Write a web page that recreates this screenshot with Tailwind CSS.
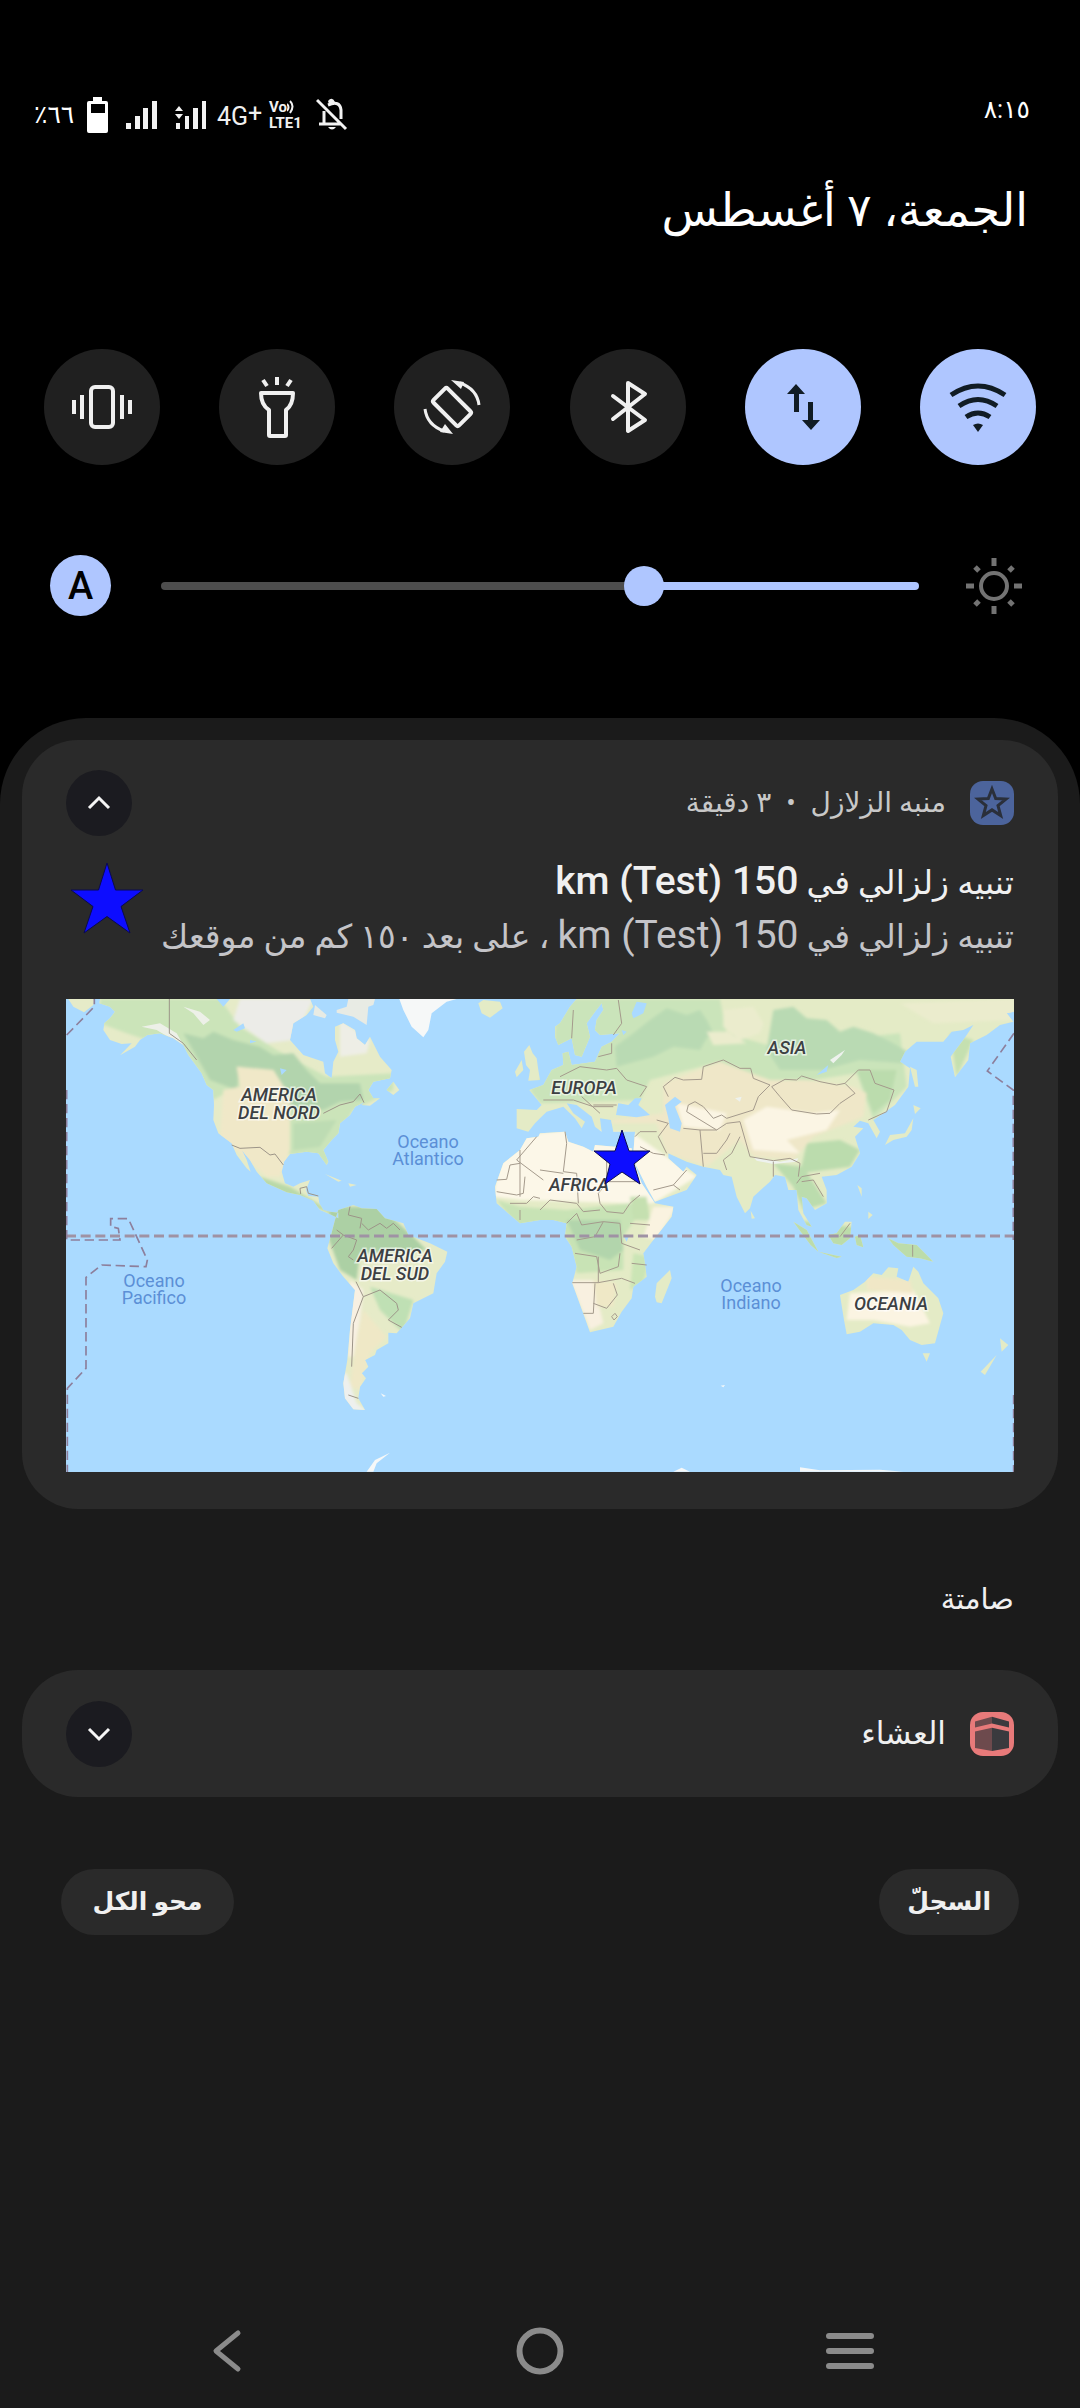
<!DOCTYPE html>
<html lang="ar" dir="rtl">
<head>
<meta charset="utf-8">
<meta name="viewport" content="width=device-width, initial-scale=1">
<title>لوحة الإشعارات</title>
<script src="https://cdn.jsdelivr.net/npm/@tailwindcss/browser@4"></script>
</head>
<body class="bg-black">
<div class="flex min-h-screen flex-col bg-black font-[Roboto,'DejaVu_Sans',sans-serif] text-[#f0f0f0]">

  <!-- Status bar -->
  <header class="flex h-[140px] items-end justify-between px-[50px] pb-2">
    <time class="pb-[6px] text-[25px] leading-8 text-white" dir="ltr">٨:١٥</time>
    <div class="-ml-4 flex h-[34px] items-center" dir="ltr">
      <span class="w-[53px] text-[25px] leading-8 text-white">٪٦٦</span>
      <svg class="h-9 w-[22px]" viewBox="0 0 22 36" fill="#fff" aria-label="البطارية"><path fill-rule="evenodd" d="M6 0h9v4h4q2 0 2 2v28q0 2-2 2H2q-2 0-2-2V6q0-2 2-2h4zM4 7v9h14V7z"/></svg>
      <svg class="ml-[17px] h-7 w-8" viewBox="0 0 32 28" fill="#f2f2f2"><path d="M0 22h5v6H0zM9 15h5v13H9zM17 7h5v21h-5zM26 0h5v28h-5z"/></svg>
      <svg class="ml-[17px] h-7 w-8" viewBox="0 0 32 28" fill="#f2f2f2"><path d="M1 22h4v6H1zM10 15h4v13h-4zM18 7h5v21h-5zM27 0h4v28h-4zM4 5l4 5H0zM0 13h8l-4 5z"/></svg>
      <span class="ml-[10px] w-[46px] text-[25px] leading-8">4G<span class="align-[3px] text-[25px]">+</span></span>
      <span class="ml-[6px] flex w-9 flex-col text-[15px] leading-4 font-bold">
        <span class="flex items-center">Vo<svg class="h-[14px] w-2" viewBox="0 0 8 14" fill="none" stroke="#f2f2f2" stroke-width="2"><path d="M0 4q3 3 0 7M3 1q5 5 0 12"/></svg></span>
        <span>LTE1</span>
      </span>
      <svg class="ml-[11px] h-[34px] w-8" viewBox="0 0 32 34" fill="none" stroke="#f2f2f2" stroke-width="3"><path d="M1 2l29 29M3 26h22M8 25V13M12 7q12-5 13 5v9"/><path d="M12 3q4-5 7 1l-1 2h-5zM12 29h8q-4 5-8 0z" fill="#f2f2f2" stroke="none"/></svg>
    </div>
  </header>

  <h1 class="px-[52px] pt-7 text-[46px] leading-[84px] text-white">الجمعة، ٧ أغسطس</h1>

  <!-- Quick settings -->
  <section class="mt-[97px] flex justify-between px-[44px]">
    <button class="flex size-[116px] items-center justify-center rounded-full bg-[#afc6ff] text-[#111c24]" aria-label="واي فاي">
      <svg class="size-16" viewBox="0 0 64 64" fill="none" stroke="currentColor" stroke-width="5"><path d="M5 20q27-18 54 0M13 31q19-13 38 0M20 42q12-8 24 0"/><path d="M27 50q5-3 10 0l-5 7z" fill="currentColor" stroke="none"/></svg>
    </button>
    <button class="flex size-[116px] items-center justify-center rounded-full bg-[#afc6ff] text-[#111c24]" aria-label="بيانات الجوال">
      <svg class="size-16" viewBox="0 0 64 64" fill="currentColor"><path d="M25 9l9 10h-6v18h-5V19h-7zM37 27h5v18h7l-9 10-9-10h6z"/></svg>
    </button>
    <button class="flex size-[116px] items-center justify-center rounded-full bg-[#202020]" aria-label="بلوتوث">
      <svg class="size-16" viewBox="0 0 64 64" fill="none" stroke="currentColor" stroke-width="4" stroke-linejoin="round" stroke-linecap="round"><path d="M17 21l32 24-17 11V8l17 11-32 25"/></svg>
    </button>
    <button class="flex size-[116px] items-center justify-center rounded-full bg-[#202020]" aria-label="تدوير تلقائي">
      <svg class="size-16" viewBox="0 0 64 64" fill="none" stroke="currentColor" stroke-width="4"><rect x="22" y="14" width="20" height="36" rx="2" transform="rotate(-45 32 32)"/><path d="M40 8q17 6 19 22M24 56Q7 50 5 34" stroke-width="3"/><path d="M31 5l13 2-3 7zM33 59l-13-2 5-8z" fill="currentColor" stroke="none"/></svg>
    </button>
    <button class="flex size-[116px] items-center justify-center rounded-full bg-[#202020]" aria-label="المصباح">
      <svg class="size-16" viewBox="0 0 64 64" fill="none" stroke="currentColor" stroke-width="4"><path d="M16 18h32q0 12-7 17v25q0 1-1 1H25q-1 0-1-1V35q-8-5-8-17z" stroke-linejoin="round"/><path d="M32 2v8M18 5l4 6M46 5l-4 6"/></svg>
    </button>
    <button class="flex size-[116px] items-center justify-center rounded-full bg-[#202020]" aria-label="اهتزاز">
      <svg class="size-16" viewBox="0 0 64 64" fill="none" stroke="currentColor" stroke-width="4"><rect x="21" y="12" width="22" height="40" rx="4"/><path d="M12 20v24M4 25v14M52 20v24M60 25v14"/></svg>
    </button>
  </section>

  <!-- Brightness -->
  <section class="mt-[90px] flex items-center px-[50px]">
    <svg class="mr-2 ml-[47px] size-14 shrink-0" viewBox="0 0 56 56" fill="none" stroke="#737373" stroke-width="4"><circle cx="28" cy="28" r="13"/><path d="M28 0v8M28 48v8M0 28h8M48 28h8" stroke-width="5"/><path d="M9 9l4 4M43 43l4 4M47 9l-4 4M13 43l-4 4" stroke-width="5"/></svg>
    <input type="range" min="0" max="1000" value="355" aria-label="السطوع" class="h-10 min-w-0 flex-1 appearance-none bg-transparent [&::-webkit-slider-runnable-track]:h-2 [&::-webkit-slider-runnable-track]:rounded-full [&::-webkit-slider-runnable-track]:bg-[linear-gradient(to_left,#afc6ff_36%,#4d4d4d_36%)] [&::-webkit-slider-thumb]:-mt-4 [&::-webkit-slider-thumb]:size-10 [&::-webkit-slider-thumb]:appearance-none [&::-webkit-slider-thumb]:rounded-full [&::-webkit-slider-thumb]:bg-[#afc6ff]">
    <button class="mr-[50px] flex size-[61px] shrink-0 items-center justify-center rounded-full bg-[#afc6ff] text-[38px] leading-none font-medium text-black">A</button>
  </section>

  <!-- Notification shade -->
  <main class="mt-[102px] flex flex-1 flex-col rounded-t-[86px] bg-[#1b1b1b] px-[22px] pt-[22px]">
    <article class="rounded-[56px] bg-[#2a2a2a] px-11 pt-[30px] pb-[37px]">
      <div class="flex items-center">
        <svg class="size-11" viewBox="0 0 44 44"><rect width="44" height="44" rx="13" fill="#4c649c"/><path d="M22 8l3.700 9.600 10.300.5-8 6.500 2.700 9.900-8.700-5.600-8.700 5.600 2.700-9.900-8-6.500 10.300-.5z" fill="none" stroke="#2a2f3a" stroke-width="3"/></svg>
        <p class="mr-6 flex-1 text-[28px] leading-8 text-[#c8c8c8]">منبه الزلازل <span class="px-2">•</span> ٣ دقيقة</p>
        <button class="flex size-[66px] items-center justify-center rounded-full bg-[#1b1b20]" aria-label="طي">
          <svg class="h-4 w-6" viewBox="0 0 24 16" fill="none" stroke="#f5f5f5" stroke-width="3"><path d="M2 13l10-10 10 10"/></svg>
        </button>
      </div>
      <div class="mt-5 flex justify-between">
        <div class="text-[33px] leading-[54px] whitespace-nowrap">
          <h2 class="font-medium">تنبيه زلزالي في <span class="text-[39px] leading-9">150 km (Test)</span></h2>
          <p class="text-[#c4c4c8]">تنبيه زلزالي في <span class="text-[39px] leading-9">150 km (Test)</span> ، على بعد ١٥٠ كم من موقعك</p>
        </div>
        <svg class="ml-1 mt-[5px] h-[74px] w-[74px] shrink-0" viewBox="0 0 74 74"><path d="M37 2l8.500 27H73L51 45.500 60 72 37 55.500 14 72l9-26.500L1 29h27.500z" fill="#0d0dff" stroke="#0a0a50"/></svg>
      </div>

      <!-- World map -->
      <svg class="mt-[35px] block w-full" viewBox="0 0 948 473" direction="ltr" role="img" aria-label="خريطة العالم">
        <defs>
          <clipPath id="west"><path id="westLand" d="M120 27L118 40 150 50 165 65 150 85 133 100 130 120 150 150 185 162 215 160 180 196 225 170 240 150 262 135 300 130 340 145 370 165 385 195 400 215 425 250 440 285 460 300 462 345 460 390 475 430 515 460 530 495 560 535 572 545 560 510 545 480 570 510 590 545 620 580 680 607 720 615 760 632 780 660 815 675 835 685V668L810 665 790 660 778 640 775 620 745 618 738 600 750 570 720 580 700 590 675 580 665 545 672 515 690 492 740 485 775 490 800 525 805 515 790 480 815 450 835 430 840 400 870 375 885 350 915 335 905 345 930 347 960 325 940 325 925 300 940 275 990 265 995 240 960 200 930 140 915 165 890 145 885 120 850 100 825 110V150L835 185 820 215 815 265 795 250 790 215 730 195 690 150 700 100 740 75 760 50 750 27ZM825 690L835 660 880 645 905 655 950 657 975 685 1030 700 1045 735 1110 760 1162 785 1155 815 1130 850 1120 910 1060 940 1050 985 1010 1030 985 1028V1060L950 1080 945 1095 915 1110 925 1130 905 1150 918 1165 900 1190 895 1225 915 1260 880 1258 855 1225 850 1180 862 1110 870 1020 885 900 850 860 820 820 802 775 812 740ZM25 27L105 27 100 45 72 67 40 50ZM980 300L1000 275 1018 300 1000 315ZM795 552L845 572 835 575ZM865 580L890 585 870 590Z"/></clipPath>
          <clipPath id="east"><path id="eastLand" d="M-70 357L-10 360 5 345-32 300 10 285 35 240 70 225 68 190 85 185 95 225 165 215 185 170 215 155 240 130 180 135 165 120 170 90 190 60 185 40 165 65 140 100 150 140 125 200 105 195 95 145 55 165 45 140V110L60 100 90 50 110 27H1422V65L1400 70 1420 95 1380 105 1340 135 1290 160 1285 210 1245 262 1232 200 1270 150 1300 105 1270 120 1235 125 1210 155 1130 155 1095 185 1080 215 1110 235 1105 290 1065 345 1030 370 1000 390 1020 425 1010 445 985 400 960 392 940 410 970 415 945 440 960 490 935 530 890 555 845 560 860 600V640L825 660 800 625 785 620 790 670 815 710 800 705 775 660 770 600 745 600 735 560 705 555 690 575 640 620 630 655 615 670 590 620 575 560 550 555 540 540 490 530 440 515 385 490 V505L430 545 440 530 470 555 440 600 345 635 320 590 285 520 280 490 285 425 220 425 213 390 180 385 185 425 165 410 155 380 110 345 80 340 100 370 135 395 125 415 105 385 70 350 20 365 0 385-15 400-35 425-70 415ZM-40 445L-5 440 0 430 75 425 85 455 130 470 160 485 165 465 275 475 280 510 305 580 345 640 400 650 395 680 340 750 310 790 320 860 280 890 275 925 245 965 220 1010 150 1027 135 985 97 880 110 830 95 770 75 740 80 700 40 690H0L-60 700-130 640-135 590-110 520-60 480ZM345 920L350 880 390 840 395 865 365 940 350 937ZM632 662L645 685 635 686ZM760 695L800 720 835 785 812 765ZM835 785L905 800 890 804ZM865 735L890 730 915 695 935 695 930 745 905 765 880 760ZM945 740L960 735 970 772 950 765ZM1045 745L1075 760 1130 765 1180 815 1140 805 1100 800 1060 765ZM952 585L965 595V620ZM985 665L998 675 985 687ZM1035 465L1050 435 1095 430 1120 385 1115 420 1100 440 1060 450ZM1120 345L1142 355 1125 372ZM1110 230L1130 240 1135 290 1125 290ZM900 915L940 900 975 875 1000 850 1025 855 1045 832 1075 835 1070 860 1105 875 1120 830 1135 845 1150 880 1195 925 1210 970 1185 1060 1145 1065 1110 1050 1085 1020 1060 1005 1000 1000 960 1025 920 1033 912 990ZM1148 1090H1170L1160 1115ZM1380 1045L1405 1065 1385 1085ZM1370 1095L1335 1155 1322 1145ZM-48 185L-32 165-22 190-10 205-5 240 0 270-35 272-30 240-42 225ZM-75 245L-55 210-50 240-70 262ZM-185 40L-170 30-120 35-112 55-150 83-175 70Z"/></clipPath>
          <filter id="soft" x="-10%" y="-10%" width="120%" height="120%"><feGaussianBlur stdDeviation="5"/></filter>
        </defs>
        <rect width="948" height="473" fill="#aadaff"/>
        <g transform="translate(-6 -9) scale(.33333)">
          <use href="#westLand" fill="#e6ebc8"/>
          <g clip-path="url(#west)">
            <g filter="url(#soft)">
              <path d="M120 27H480L540 110 650 180 800 260 1000 250V300L880 360 830 450 800 530 680 490 690 380 530 290 460 330 380 190 200 130 120 100Z" fill="#cbe4b9"/>
              <path d="M370 130L430 145 460 125 520 150 600 170 640 195 700 190 740 240 780 280 900 280 910 330 840 335 790 360 700 350 640 270 540 230 530 300 450 270Z" fill="#b2d4ad"/>
              <path d="M700 400L830 390 780 470 700 480Z" fill="#bddcb3"/>
              <path d="M530 230L640 240 690 320 690 480 660 560 620 560 480 440 490 300 540 290Z" fill="#f0e8c8"/>
              <path d="M540 27H760L700 150 620 160 520 90Z" fill="#ecece8"/>
              <path d="M840 90L930 150 920 190 840 200Z" fill="#eeeee6"/>
              <path d="M600 560L690 590 840 680 760 650 620 600Z" fill="#b9d9a8"/>
              <path d="M810 650H960L1060 740 1100 780 900 790 890 870 840 840 800 730Z" fill="#acd0a4"/>
              <path d="M930 890L1060 930 1030 1030 960 960Z" fill="#bfe0b4"/>
              <path d="M870 870L910 900 900 990 880 1100 865 1100Z" fill="#f8f0e2"/>
              <path d="M910 960L980 1040 930 1090 900 1200 870 1190 890 1050Z" fill="#efe8c6"/>
              <path d="M840 1150L860 1150 890 1240 930 1270 850 1260Z" fill="#eef0ee"/>
            </g>
            <path d="M245 110L300 100 350 130 370 165 340 150 290 120ZM370 50L420 65 450 90 430 105 400 70ZM400 150L455 175M455 235L490 270" fill="#edf0e8"/>
            <path d="M520 120L550 100 555 115 530 125ZM660 235L680 240 665 255ZM570 150L590 155 570 160ZM470 27H510L490 50Z" fill="#aadaff"/>
          </g>
          <path d="M1018 27L1030 60 1055 110 1090 142 1105 120 1115 70 1160 35 1190 27ZM920 1445L945 1410 990 1388 950 1420 940 1445ZM962 1210L978 1218 970 1220Z" fill="#f6f8f8"/>
          <path d="M765 45L800 75 795 85 760 75ZM830 60L860 50 865 27H945L940 45 925 50 920 105 880 80 830 68Z" fill="#e8ebe4"/>
          <g fill="none" stroke="#9c9488" stroke-width="3">
            <path d="M328 27V130L370 160 410 210M515 465L540 475 600 472 630 495 645 492 670 525M790 370L840 345 880 335 900 312 912 338M722 612L720 595 740 590 745 610 775 618M870 650L865 675 905 685 900 715M815 775L850 735 890 750 880 780 865 800 880 810M905 700L925 720 960 700 980 715 1000 700 1020 720M850 735L830 720M888 875L910 920 880 1000 875 1130M910 920L960 900 1010 940 1015 960 985 990M985 990L1025 1012M865 1215L895 1225"/>
          </g>
          <g transform="translate(1440 0)">
            <use href="#eastLand" fill="#e4ebc6"/>
            <g clip-path="url(#east)">
              <g filter="url(#soft)">
                <path d="M50 27H540L560 130 700 170 1080 130 1100 290 1000 390 950 250 690 290 540 215 330 270 300 330 0 340-30 300 40 230Z" fill="#cae4ba"/>
                <path d="M280 130L330 90 380 55 440 75 480 60 500 90 520 130 500 145 480 180 400 170 340 200 230 230 225 170ZM700 60L760 50 800 85 860 90 900 125 940 110 1000 130 1060 160 1110 190 1090 220 960 210 850 240 720 240 680 180Z" fill="#b9dab3"/>
                <path d="M950 240L1070 240 1050 330 1000 370ZM800 460L900 450 960 480 930 530 780 550ZM700 520L790 530 860 640 790 660 760 590Z" fill="#bbdcad"/>
                <path d="M550 60L640 50 670 100 660 130 600 150 550 110ZM500 125L560 125 620 160 520 165ZM1080 40L1422 27V90L1180 100Z" fill="#ebeccd"/>
                <path d="M370 280L540 215 690 270 800 270 940 290 980 310 970 380 820 440 760 510 640 500 600 450 500 530 380 490 350 400 210 400 220 390 370 370Z" fill="#efe7c8"/>
                <path d="M610 390L680 350 820 370 900 360 860 420 740 450 780 490 640 480ZM410 340L560 370 540 420 430 410Z" fill="#fbf5e4"/>
                <path d="M-110 440L80 420 280 430 380 500 470 560 340 640 260 640-60 630-140 620Z" fill="#fcf7e8"/>
                <path d="M-130 630L-60 650 80 660 270 640 290 680 250 740 250 840 110 850 90 770 60 700-60 720Z" fill="#c8e3b5"/>
                <path d="M80 690H240L250 780 210 810 120 780Z" fill="#b2d5ac"/>
                <path d="M270 620L320 620 330 690 280 690Z" fill="#c5e0b0"/>
                <path d="M280 790L330 800 310 880 270 900Z" fill="#cbe5b5"/>
                <path d="M90 870H160L190 1000 150 1020Z" fill="#f8f0e0"/>
                <path d="M340 650L410 650 350 750 310 740Z" fill="#faf3e0"/>
                <path d="M160 870L230 880 220 950 170 950Z" fill="#efe8c6"/>
                <path d="M930 910L1120 900 1170 1000 1110 1010 1000 990 920 990Z" fill="#fbf4e2"/>
                <path d="M980 860L1110 870 1120 910 980 900Z" fill="#f0e7c6"/>
                <path d="M760 690L1180 740V820L760 810Z" fill="#bcdcaa"/>
                <path d="M1230 130L1300 150 1250 260Z" fill="#c5e0b0"/>
              </g>
              <path d="M870 210L915 180 905 195 880 220ZM640 500L720 515 775 505 770 515 700 522 650 512ZM585 325L605 320 600 335Z" fill="#eef2ee"/>
              <path d="M228 375L235 340 265 345 285 325 305 325 295 345 330 375 290 382ZM375 345L405 320 425 335 405 350 425 400 420 425 390 415 385 385ZM275 70L290 35 320 40 310 70 280 85ZM830 255L865 225 860 245ZM252 740L268 735 260 755ZM245 120L260 125 250 135Z" fill="#aadaff"/>
            </g>
            <g fill="none" stroke="#a49a8c" stroke-width="3">
              <path d="M370 290L405 262 430 270 485 268 490 230 550 210 600 235 632 235 640 265 690 285 655 320 640 360 560 385 545 375 520 385 490 350 465 335 445 345 440 365M370 290L385 320M695 290L735 268 770 270 785 258 840 275 890 285 915 280 945 310 900 340 870 370 830 372 755 360 720 320ZM915 280L955 240 990 240 1005 280 1062 300 1040 365 985 390M600 395L630 500 700 512 750 505 780 520 775 560M430 415L480 420 530 420 560 400 600 395M480 420L490 530M490 490L530 490 560 450 570 430M600 440L575 490 550 510 560 540M700 515V560M770 580L785 560 840 550M785 575L820 570 850 620M440 365L530 420M350 390L385 400 355 440 380 490M285 440L300 425 350 425M300 470L340 490 375 495M340 600L400 585 420 600M400 585L440 540M0 660L30 630 110 640 130 665 180 660M180 640L175 610 200 580M75 425L80 460 70 545 110 550 115 640M0 540L70 550M200 490V575H300M180 640L200 665 250 670 270 640 300 615M80 700L110 670 125 705 190 695 240 700M110 750L165 740 190 695M240 700L245 760 300 780M105 790L170 800 180 850 235 830 240 790M97 878H175L245 865 285 880M175 800V878M165 880L160 970H130M160 940L200 955 232 915 220 880M270 700L330 705M275 820L320 825M215 980L225 970 232 980 222 990ZM-60 620L-60 480M-130 570L-100 568-90 525-60 520M-10 440L-70 510 10 570M-130 605L-70 615-50 610-45 560M-90 640H-40L-20 620 0 625M-60 690V660M100 60L95 145M235 30L245 100 220 135M10 330H100L160 350 220 350M60 260L120 230 200 240 230 235 260 270 320 290 300 320M175 200L215 190V160M125 320L180 370M230 345H160M900 740L930 700M1118 765V800"/>
            </g>
            <path d="M400 1445L425 1433 450 1445ZM780 1445V1432L840 1441 1020 1439 1090 1445ZM542 1187L555 1185 550 1192Z" fill="#f6f8f8"/>
          </g>
          <g fill="none" stroke="#8d7f9c" stroke-width="5" stroke-dasharray="28 14">
            <path d="M18 738H2862" stroke="#9f92a4" stroke-width="9" stroke-dasharray="30 14"/>
            <path d="M20 135L103 50V27M20 300V750H180L175 715 152 710V686H205L262 810 258 830 125 825 78 862V1135L22 1195V1446M2862 130L2782 243 2860 300V750M2861 1215V1446"/>
          </g>
        </g>
        <g font-family="Roboto, sans-serif" font-size="18" font-weight="500" text-anchor="middle">
          <g font-style="italic" fill="#3c4043" stroke="#ffffff" stroke-opacity=".6" stroke-width="3" paint-order="stroke">
            <text x="213" y="102">AMERICA</text><text x="213" y="120">DEL NORD</text>
            <text x="329" y="263">AMERICA</text><text x="329" y="281">DEL SUD</text>
            <text x="518" y="95">EUROPA</text><text x="513" y="192">AFRICA</text>
            <text x="721" y="55">ASIA</text><text x="825" y="311">OCEANIA</text>
          </g>
          <g fill="#5b8fd6" font-weight="400">
            <text x="362" y="149">Oceano</text><text x="362" y="166">Atlantico</text>
            <text x="88" y="288">Oceano</text><text x="88" y="305">Pacifico</text>
            <text x="685" y="293">Oceano</text><text x="685" y="310">Indiano</text>
          </g>
        </g>
        <path d="M556 131l7 21h21l-16 13 6 20-18-12-17 12 5-20-16-13h21z" fill="#0d0dff" stroke="#0a0a50"/>
      </svg>
    </article>

    <h2 class="px-11 pt-[70px] text-[29px] leading-[40px]">صامتة</h2>

    <article class="mt-[51px] flex h-[127px] items-center rounded-[56px] bg-[#2a2a2a] px-11">
      <svg class="size-11" viewBox="0 0 44 44"><rect width="44" height="44" rx="13" fill="#e87a7a"/><path d="M5 9.500L22 4.700V11.500L5 15.500ZM5 19.500L22 15.700V39L5 36Z" fill="#6d4a4d"/><path d="M39 9.500L22 4.700V11.500L39 15.500ZM39 19.500L22 15.700V39L39 36Z" fill="#3a3a3e"/></svg>
      <h3 class="mr-6 flex-1 text-[31px] leading-10">العشاء</h3>
      <button class="flex size-[66px] items-center justify-center rounded-full bg-[#1b1b20]" aria-label="توسيع">
        <svg class="h-4 w-6" viewBox="0 0 24 16" fill="none" stroke="#f5f5f5" stroke-width="3"><path d="M2 3l10 10 10-10"/></svg>
      </button>
    </article>

    <div class="mt-[72px] flex justify-between px-[39px]">
      <button class="h-[66px] min-w-[139px] rounded-full bg-[#2a2a2a] px-[28px] text-[25px] font-bold">السجلّ</button>
      <button class="h-[66px] min-w-[173px] rounded-full bg-[#2a2a2a] px-[28px] text-[25px] font-bold">محو الكل</button>
    </div>

    <!-- Navigation bar -->
    <nav class="mt-auto grid grid-cols-3 pb-[33px]">
      <button class="flex h-12 items-center justify-center pl-[32px] pr-[102px]" aria-label="التطبيقات الأخيرة"><svg class="h-10 w-[50px]" viewBox="0 0 50 40" stroke="#8b8b8b" stroke-width="6" stroke-linecap="round"><path d="M4 5h42M4 20h42M4 35h42"/></svg></button>
      <button class="flex h-12 items-center justify-center" aria-label="الرئيسية"><svg class="size-12" viewBox="0 0 48 48" fill="none" stroke="#8b8b8b" stroke-width="6"><circle cx="24" cy="24" r="20.500"/></svg></button>
      <button class="flex h-12 items-center justify-center pl-16" aria-label="رجوع"><svg class="h-11 w-[30px]" viewBox="0 0 30 44" fill="none" stroke="#8b8b8b" stroke-width="5" stroke-linecap="round" stroke-linejoin="round"><path d="M26 4L4 22l22 18"/></svg></button>
    </nav>
  </main>
</div>
</body>
</html>
